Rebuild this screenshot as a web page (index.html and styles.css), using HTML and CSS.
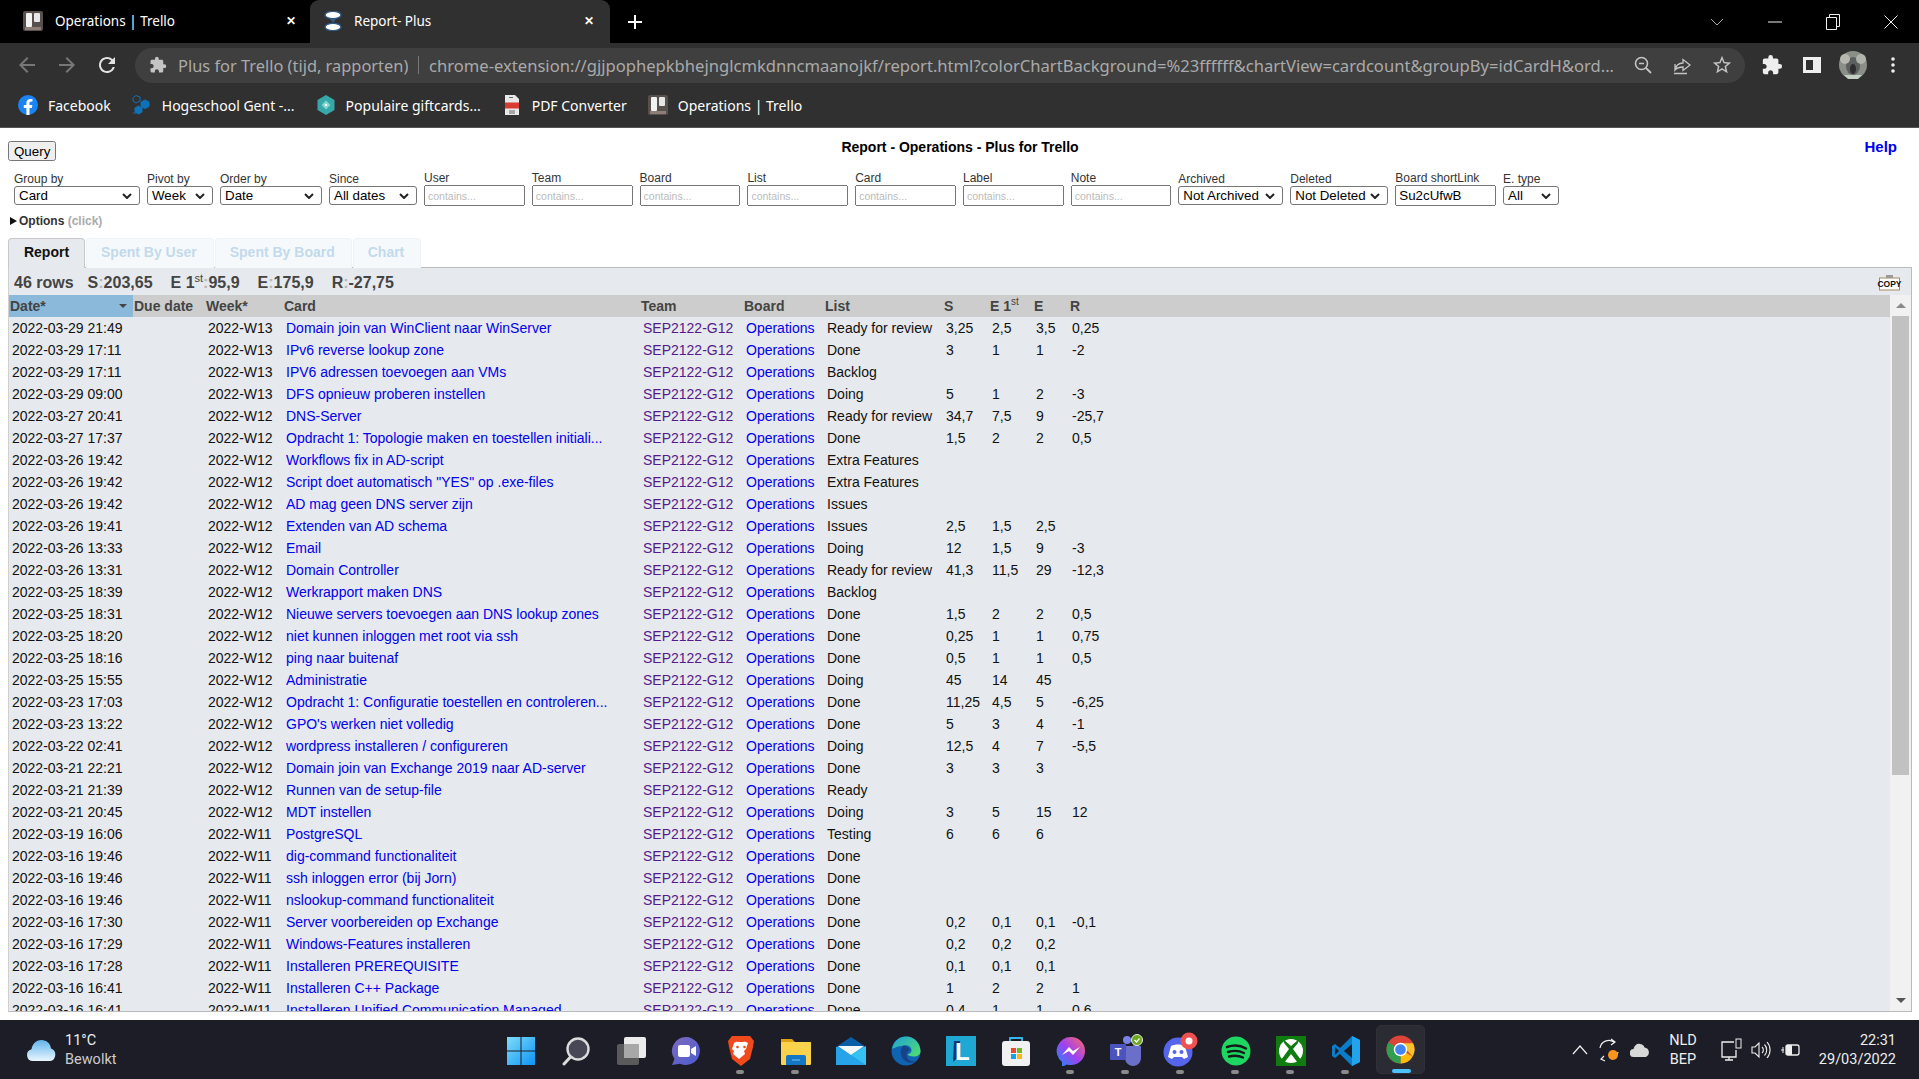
FILE: index.html
```html
<!DOCTYPE html>
<html lang="en">
<head>
    <meta charset="UTF-8">
    <title>Report- Plus</title>
    <link rel="stylesheet" href="styles.css">
</head>
<body>
<svg class="defs" width="0" height="0">
    <symbol id="trello" viewBox="0 0 20 20">
        <rect width="20" height="20" rx="2" fill="#57504c"/>
        <rect x="3" y="2" width="6" height="14" rx="1" fill="#f2f2f2"/>
        <rect x="11" y="2" width="6" height="9" rx="1" fill="#e6e6e6"/>
        <rect x="2" y="16" width="16" height="3" fill="#8d7f78"/>
    </symbol>
    <symbol id="hourglass" viewBox="0 0 20 20">
        <ellipse cx="10" cy="4" rx="8" ry="3.6" fill="#fff" stroke="#2e5a85" stroke-width="1.4"/>
        <ellipse cx="10" cy="16" rx="8" ry="3.6" fill="#fff" stroke="#2e5a85" stroke-width="1.4"/>
        <path d="M7 8h6l-3 4z" fill="#2e5a85"/>
    </symbol>
</svg>

<header class="browser">
    <div class="tabstrip">
        <div class="tab">
            <svg class="favicon" width="20" height="20"><use href="#trello"/></svg>
            <span class="tab-title">Operations | Trello</span>
            <span class="tab-close">✕</span>
        </div>
        <div class="tab tab-active">
            <svg class="favicon" width="20" height="20"><use href="#hourglass"/></svg>
            <span class="tab-title">Report- Plus</span>
            <span class="tab-close">✕</span>
        </div>
        <svg class="newtab" width="16" height="16" viewBox="0 0 16 16"><path d="M8 1v14M1 8h14" stroke="#fff" stroke-width="2"/></svg>
        <div class="window-btns">
            <svg width="14" height="10" viewBox="0 0 14 10"><path d="M1 2l6 6 6-6" fill="none" stroke="#aaa"/></svg>
            <svg width="14" height="14" viewBox="0 0 14 14"><path d="M0 7h14" stroke="#eee"/></svg>
            <svg width="14" height="16" viewBox="0 0 14 16"><path d="M.5 3.5h10v12H.5zM3.5 3V.5h10v12H11" fill="none" stroke="#eee"/></svg>
            <svg width="14" height="14" viewBox="0 0 14 14"><path d="M.5.5l13 13M13.5.5l-13 13" stroke="#eee"/></svg>
        </div>
    </div>

    <div class="toolbar">
        <svg class="nav-icon" width="24" height="24" viewBox="0 0 24 24"><path fill="#777" d="M20 11H7.83l5.59-5.59L12 4l-8 8 8 8 1.41-1.41L7.83 13H20v-2z"/></svg>
        <svg class="nav-icon" width="24" height="24" viewBox="0 0 24 24"><path fill="#777" d="M4 11h12.17l-5.59-5.59L12 4l8 8-8 8-1.41-1.41L16.17 13H4v-2z"/></svg>
        <svg class="nav-icon" width="24" height="24" viewBox="0 0 24 24"><path fill="#e3e3e3" d="M17.65 6.35A7.958 7.958 0 0 0 12 4c-4.42 0-7.99 3.58-7.99 8s3.57 8 7.99 8c3.73 0 6.84-2.55 7.73-6h-2.08A5.99 5.99 0 0 1 12 18c-3.31 0-6-2.69-6-6s2.69-6 6-6c1.66 0 3.14.69 4.22 1.78L13 11h7V4l-2.35 2.35z"/></svg>
        <div class="omnibox">
            <svg width="18" height="18" viewBox="0 0 24 24"><path fill="#c4c4c4" d="M20.5 11H19V7c0-1.1-.9-2-2-2h-4V3.5a2.5 2.5 0 0 0-5 0V5H4c-1.1 0-1.99.9-1.99 2v3.8H3.5c1.49 0 2.7 1.21 2.7 2.7s-1.21 2.7-2.7 2.7H2V20c0 1.1.9 2 2 2h3.8v-1.5c0-1.49 1.21-2.7 2.7-2.7 1.49 0 2.7 1.21 2.7 2.7V22H17c1.1 0 2-.9 2-2v-4h1.5a2.5 2.5 0 0 0 0-5z"/></svg>
            <span class="ext-name">Plus for Trello (tijd, rapporten)</span>
            <span class="ext-sep"></span>
            <span class="url">chrome-extension://gjjpophepkbhejnglcmkdnncmaanojkf/report.html?colorChartBackground=%23ffffff&amp;chartView=cardcount&amp;groupBy=idCardH&amp;ord...</span>
            <div class="omni-icons">
                <svg width="20" height="20" viewBox="0 0 20 20"><circle cx="8.5" cy="8.5" r="6" fill="none" stroke="#c4c4c4" stroke-width="1.6"/><path d="M13 13l5 5" stroke="#c4c4c4" stroke-width="1.8"/><path d="M6 8.5h5" stroke="#c4c4c4" stroke-width="1.4"/></svg>
                <svg width="20" height="20" viewBox="0 0 20 20"><path d="M2 18.5h13M3 9v6.5M3 15c1-5 4-7 8-7V4.5l7 5.5-7 5.5V12c-3 0-6 1-8 3z" fill="none" stroke="#c4c4c4" stroke-width="1.3"/></svg>
                <svg width="22" height="22" viewBox="0 0 24 24"><path fill="#c4c4c4" d="M22 9.24l-7.19-.62L12 2 9.19 8.63 2 9.24l5.46 4.73L5.82 21 12 17.27 18.18 21l-1.63-7.03L22 9.24zM12 15.4l-3.76 2.27 1-4.28-3.32-2.88 4.38-.38L12 6.1l1.71 4.04 4.38.38-3.32 2.88 1 4.28L12 15.4z"/></svg>
            </div>
        </div>
        <div class="tool-icons">
            <svg width="22" height="22" viewBox="0 0 24 24"><path fill="#eee" d="M20.5 11H19V7c0-1.1-.9-2-2-2h-4V3.5a2.5 2.5 0 0 0-5 0V5H4c-1.1 0-1.99.9-1.99 2v3.8H3.5c1.49 0 2.7 1.21 2.7 2.7s-1.21 2.7-2.7 2.7H2V20c0 1.1.9 2 2 2h3.8v-1.5c0-1.49 1.21-2.7 2.7-2.7 1.49 0 2.7 1.21 2.7 2.7V22H17c1.1 0 2-.9 2-2v-4h1.5a2.5 2.5 0 0 0 0-5z"/></svg>
            <svg width="18" height="18" viewBox="0 0 18 18"><path fill-rule="evenodd" fill="#eee" d="M0 1h18v16H0zM3 4v10h7V4z"/></svg>
            <svg class="avatar" width="28" height="28" viewBox="0 0 28 28"><circle cx="14" cy="14" r="14" fill="#8a8f88"/><ellipse cx="14" cy="15" rx="7" ry="9" fill="#5c5f60"/><circle cx="6" cy="8" r="5" fill="#b8b8b0"/><circle cx="22" cy="8" r="5" fill="#b0b4ac"/><ellipse cx="14" cy="18" rx="3" ry="5" fill="#2e2e30"/><path d="M5 24h18l-4 4H9z" fill="#c4cfc4"/></svg>
            <svg class="menu-dots" width="4" height="16" viewBox="0 0 4 16"><circle cx="2" cy="2" r="1.8" fill="#eee"/><circle cx="2" cy="8" r="1.8" fill="#eee"/><circle cx="2" cy="14" r="1.8" fill="#eee"/></svg>
        </div>
    </div>

    <nav class="bookmarks">
        <a class="bookmark">
            <svg width="20" height="20" viewBox="0 0 20 20"><circle cx="10" cy="10" r="10" fill="#1a84f4"/><path d="M13.9 12.9l.45-2.9H11.5V8.1c0-.8.4-1.55 1.65-1.55h1.3V4.1s-1.15-.2-2.25-.2c-2.3 0-3.8 1.4-3.8 3.9V10H5.8v2.9h2.6V20h3.1v-7.1z" fill="#fff"/></svg>
            Facebook
        </a>
        <a class="bookmark">
            <svg width="20" height="20" viewBox="0 0 20 20"><g fill="#0f72b8" stroke="#0f72b8"><path d="M1 3l3-2.5L8 2v4L4 8 1 6z" fill="none"/><path d="M9 7l4-2 4 2v4.5l-4 2-4-2z"/><path d="M3 13l3.5-2 3.5 2v4l-3.5 2L3 17z"/><path d="M1 18h3"/></g></svg>
            Hogeschool Gent -...
        </a>
        <a class="bookmark">
            <svg width="20" height="20" viewBox="0 0 20 20"><path d="M10 0l8.5 5v10L10 20l-8.5-5V5z" fill="#36a8a8"/><path d="M10 5.5l4.5 4.5-4.5 4.5L5.5 10z" fill="#7fd6d0"/><circle cx="10" cy="10" r="1.3" fill="#fff"/></svg>
            Populaire giftcards...
        </a>
        <a class="bookmark">
            <svg width="20" height="20" viewBox="0 0 20 20"><path d="M3 0h10l4 4v16H3z" fill="#e8e8e8"/><rect x="3" y="7.5" width="14" height="6" fill="#d83a34"/><path d="M7 2.5h4M7 16h6M7 18h6" stroke="#666"/></svg>
            PDF Converter
        </a>
        <a class="bookmark">
            <svg width="20" height="20"><use href="#trello"/></svg>
            Operations | Trello
        </a>
    </nav>
</header>

<main class="page">
    <div class="page-head">
        <div><button class="query-btn">Query</button></div>
        <div class="page-title">Report - Operations - Plus for Trello</div>
        <div class="help"><a href="#">Help</a></div>
    </div>

    <div class="filters">
        <label class="filter w-group">Group by<select><option>Card</option></select></label>
        <label class="filter w-pivot">Pivot by<select><option>Week</option></select></label>
        <label class="filter w-order">Order by<select><option>Date</option></select></label>
        <label class="filter w-since">Since<select><option>All dates</option></select></label>
        <label class="filter w-text">User<input placeholder="contains..."></label>
        <label class="filter w-text">Team<input placeholder="contains..."></label>
        <label class="filter w-text">Board<input placeholder="contains..."></label>
        <label class="filter w-text">List<input placeholder="contains..."></label>
        <label class="filter w-text">Card<input placeholder="contains..."></label>
        <label class="filter w-text">Label<input placeholder="contains..."></label>
        <label class="filter w-note">Note<input placeholder="contains..."></label>
        <label class="filter w-archived">Archived<select><option>Not Archived</option></select></label>
        <label class="filter w-deleted">Deleted<select><option>Not Deleted</option></select></label>
        <label class="filter w-text">Board shortLink<input value="Su2cUfwB"></label>
        <label class="filter w-type">E. type<select><option>All</option></select></label>
    </div>

    <div class="options"><span class="arrow"></span>Options <span class="click">(click)</span></div>

    <div class="report-tabs">
        <div class="report-tab report-tab-on">Report</div>
        <div class="report-tab">Spent By User</div>
        <div class="report-tab">Spent By Board</div>
        <div class="report-tab">Chart</div>
    </div>

    <section class="panel">
        <div class="summary">
            <span class="rows">46 rows</span>
            <span>S<i>:</i>203,65</span>
            <span>E 1<sup>st</sup><i>:</i>95,9</span>
            <span>E<i>:</i>175,9</span>
            <span>R<i>:</i>-27,75</span>
            <div class="copy">
                <svg width="23" height="16" viewBox="0 0 23 16"><rect x="1.5" y="3" width="20" height="12" fill="#fff" stroke="#a88a5c"/><rect x="8" y="0" width="7" height="3" fill="#999"/></svg>
                <span class="copy-text">COPY</span>
            </div>
        </div>
        <div class="report-body">
            <div class="table-wrap">
                <table>
                    <colgroup>
                        <col class="c-date"><col class="c-due"><col class="c-week"><col class="c-card"><col class="c-team"><col class="c-board"><col class="c-list"><col class="c-s"><col class="c-e1"><col class="c-e"><col>
                    </colgroup>
                    <thead>
                        <tr><th class="sorted">Date*</th><th>Due date</th><th>Week*</th><th>Card</th><th>Team</th><th>Board</th><th>List</th><th>S</th><th>E 1<sup>st</sup></th><th>E</th><th>R</th></tr>
                    </thead>
                    <tbody>
                        <tr><td>2022-03-29 21:49</td><td></td><td>2022-W13</td><td><a>Domain join van WinClient naar WinServer</a></td><td><a class="team">SEP2122-G12</a></td><td><a>Operations</a></td><td>Ready for review</td><td>3,25</td><td>2,5</td><td>3,5</td><td>0,25</td></tr>
                        <tr><td>2022-03-29 17:11</td><td></td><td>2022-W13</td><td><a>IPv6 reverse lookup zone</a></td><td><a class="team">SEP2122-G12</a></td><td><a>Operations</a></td><td>Done</td><td>3</td><td>1</td><td>1</td><td>-2</td></tr>
                        <tr><td>2022-03-29 17:11</td><td></td><td>2022-W13</td><td><a>IPV6 adressen toevoegen aan VMs</a></td><td><a class="team">SEP2122-G12</a></td><td><a>Operations</a></td><td>Backlog</td><td></td><td></td><td></td><td></td></tr>
                        <tr><td>2022-03-29 09:00</td><td></td><td>2022-W13</td><td><a>DFS opnieuw proberen instellen</a></td><td><a class="team">SEP2122-G12</a></td><td><a>Operations</a></td><td>Doing</td><td>5</td><td>1</td><td>2</td><td>-3</td></tr>
                        <tr><td>2022-03-27 20:41</td><td></td><td>2022-W12</td><td><a>DNS-Server</a></td><td><a class="team">SEP2122-G12</a></td><td><a>Operations</a></td><td>Ready for review</td><td>34,7</td><td>7,5</td><td>9</td><td>-25,7</td></tr>
                        <tr><td>2022-03-27 17:37</td><td></td><td>2022-W12</td><td><a>Opdracht 1: Topologie maken en toestellen initiali...</a></td><td><a class="team">SEP2122-G12</a></td><td><a>Operations</a></td><td>Done</td><td>1,5</td><td>2</td><td>2</td><td>0,5</td></tr>
                        <tr><td>2022-03-26 19:42</td><td></td><td>2022-W12</td><td><a>Workflows fix in AD-script</a></td><td><a class="team">SEP2122-G12</a></td><td><a>Operations</a></td><td>Extra Features</td><td></td><td></td><td></td><td></td></tr>
                        <tr><td>2022-03-26 19:42</td><td></td><td>2022-W12</td><td><a>Script doet automatisch "YES" op .exe-files</a></td><td><a class="team">SEP2122-G12</a></td><td><a>Operations</a></td><td>Extra Features</td><td></td><td></td><td></td><td></td></tr>
                        <tr><td>2022-03-26 19:42</td><td></td><td>2022-W12</td><td><a>AD mag geen DNS server zijn</a></td><td><a class="team">SEP2122-G12</a></td><td><a>Operations</a></td><td>Issues</td><td></td><td></td><td></td><td></td></tr>
                        <tr><td>2022-03-26 19:41</td><td></td><td>2022-W12</td><td><a>Extenden van AD schema</a></td><td><a class="team">SEP2122-G12</a></td><td><a>Operations</a></td><td>Issues</td><td>2,5</td><td>1,5</td><td>2,5</td><td></td></tr>
                        <tr><td>2022-03-26 13:33</td><td></td><td>2022-W12</td><td><a>Email</a></td><td><a class="team">SEP2122-G12</a></td><td><a>Operations</a></td><td>Doing</td><td>12</td><td>1,5</td><td>9</td><td>-3</td></tr>
                        <tr><td>2022-03-26 13:31</td><td></td><td>2022-W12</td><td><a>Domain Controller</a></td><td><a class="team">SEP2122-G12</a></td><td><a>Operations</a></td><td>Ready for review</td><td>41,3</td><td>11,5</td><td>29</td><td>-12,3</td></tr>
                        <tr><td>2022-03-25 18:39</td><td></td><td>2022-W12</td><td><a>Werkrapport maken DNS</a></td><td><a class="team">SEP2122-G12</a></td><td><a>Operations</a></td><td>Backlog</td><td></td><td></td><td></td><td></td></tr>
                        <tr><td>2022-03-25 18:31</td><td></td><td>2022-W12</td><td><a>Nieuwe servers toevoegen aan DNS lookup zones</a></td><td><a class="team">SEP2122-G12</a></td><td><a>Operations</a></td><td>Done</td><td>1,5</td><td>2</td><td>2</td><td>0,5</td></tr>
                        <tr><td>2022-03-25 18:20</td><td></td><td>2022-W12</td><td><a>niet kunnen inloggen met root via ssh</a></td><td><a class="team">SEP2122-G12</a></td><td><a>Operations</a></td><td>Done</td><td>0,25</td><td>1</td><td>1</td><td>0,75</td></tr>
                        <tr><td>2022-03-25 18:16</td><td></td><td>2022-W12</td><td><a>ping naar buitenaf</a></td><td><a class="team">SEP2122-G12</a></td><td><a>Operations</a></td><td>Done</td><td>0,5</td><td>1</td><td>1</td><td>0,5</td></tr>
                        <tr><td>2022-03-25 15:55</td><td></td><td>2022-W12</td><td><a>Administratie</a></td><td><a class="team">SEP2122-G12</a></td><td><a>Operations</a></td><td>Doing</td><td>45</td><td>14</td><td>45</td><td></td></tr>
                        <tr><td>2022-03-23 17:03</td><td></td><td>2022-W12</td><td><a>Opdracht 1: Configuratie toestellen en controleren...</a></td><td><a class="team">SEP2122-G12</a></td><td><a>Operations</a></td><td>Done</td><td>11,25</td><td>4,5</td><td>5</td><td>-6,25</td></tr>
                        <tr><td>2022-03-23 13:22</td><td></td><td>2022-W12</td><td><a>GPO's werken niet volledig</a></td><td><a class="team">SEP2122-G12</a></td><td><a>Operations</a></td><td>Done</td><td>5</td><td>3</td><td>4</td><td>-1</td></tr>
                        <tr><td>2022-03-22 02:41</td><td></td><td>2022-W12</td><td><a>wordpress installeren / configureren</a></td><td><a class="team">SEP2122-G12</a></td><td><a>Operations</a></td><td>Doing</td><td>12,5</td><td>4</td><td>7</td><td>-5,5</td></tr>
                        <tr><td>2022-03-21 22:21</td><td></td><td>2022-W12</td><td><a>Domain join van Exchange 2019 naar AD-server</a></td><td><a class="team">SEP2122-G12</a></td><td><a>Operations</a></td><td>Done</td><td>3</td><td>3</td><td>3</td><td></td></tr>
                        <tr><td>2022-03-21 21:39</td><td></td><td>2022-W12</td><td><a>Runnen van de setup-file</a></td><td><a class="team">SEP2122-G12</a></td><td><a>Operations</a></td><td>Ready</td><td></td><td></td><td></td><td></td></tr>
                        <tr><td>2022-03-21 20:45</td><td></td><td>2022-W12</td><td><a>MDT instellen</a></td><td><a class="team">SEP2122-G12</a></td><td><a>Operations</a></td><td>Doing</td><td>3</td><td>5</td><td>15</td><td>12</td></tr>
                        <tr><td>2022-03-19 16:06</td><td></td><td>2022-W11</td><td><a>PostgreSQL</a></td><td><a class="team">SEP2122-G12</a></td><td><a>Operations</a></td><td>Testing</td><td>6</td><td>6</td><td>6</td><td></td></tr>
                        <tr><td>2022-03-16 19:46</td><td></td><td>2022-W11</td><td><a>dig-command functionaliteit</a></td><td><a class="team">SEP2122-G12</a></td><td><a>Operations</a></td><td>Done</td><td></td><td></td><td></td><td></td></tr>
                        <tr><td>2022-03-16 19:46</td><td></td><td>2022-W11</td><td><a>ssh inloggen error (bij Jorn)</a></td><td><a class="team">SEP2122-G12</a></td><td><a>Operations</a></td><td>Done</td><td></td><td></td><td></td><td></td></tr>
                        <tr><td>2022-03-16 19:46</td><td></td><td>2022-W11</td><td><a>nslookup-command functionaliteit</a></td><td><a class="team">SEP2122-G12</a></td><td><a>Operations</a></td><td>Done</td><td></td><td></td><td></td><td></td></tr>
                        <tr><td>2022-03-16 17:30</td><td></td><td>2022-W11</td><td><a>Server voorbereiden op Exchange</a></td><td><a class="team">SEP2122-G12</a></td><td><a>Operations</a></td><td>Done</td><td>0,2</td><td>0,1</td><td>0,1</td><td>-0,1</td></tr>
                        <tr><td>2022-03-16 17:29</td><td></td><td>2022-W11</td><td><a>Windows-Features installeren</a></td><td><a class="team">SEP2122-G12</a></td><td><a>Operations</a></td><td>Done</td><td>0,2</td><td>0,2</td><td>0,2</td><td></td></tr>
                        <tr><td>2022-03-16 17:28</td><td></td><td>2022-W11</td><td><a>Installeren PREREQUISITE</a></td><td><a class="team">SEP2122-G12</a></td><td><a>Operations</a></td><td>Done</td><td>0,1</td><td>0,1</td><td>0,1</td><td></td></tr>
                        <tr><td>2022-03-16 16:41</td><td></td><td>2022-W11</td><td><a>Installeren C++ Package</a></td><td><a class="team">SEP2122-G12</a></td><td><a>Operations</a></td><td>Done</td><td>1</td><td>2</td><td>2</td><td>1</td></tr>
                        <tr><td>2022-03-16 16:41</td><td></td><td>2022-W11</td><td><a>Installeren Unified Communication Managed...</a></td><td><a class="team">SEP2122-G12</a></td><td><a>Operations</a></td><td>Done</td><td>0,4</td><td>1</td><td>1</td><td>0,6</td></tr>
                    </tbody>
                </table>
            </div>
            <div class="scrollbar">
                <div class="scroll-btn"><span class="tri-up"></span></div>
                <div class="scroll-thumb"></div>
                <div class="scroll-btn"><span class="tri-down"></span></div>
            </div>
        </div>
    </section>
</main>

<footer class="taskbar">
    <div class="weather">
        <svg width="30" height="26" viewBox="0 0 30 26"><defs><linearGradient id="cloud" x1="0" y1="0" x2="0" y2="1"><stop offset="0" stop-color="#5fb4ec"/><stop offset="1" stop-color="#eaf6fe"/></linearGradient></defs><path d="M7 24a6 6 0 0 1-1.5-11.8C6.5 6 11 3 15.5 3c5 0 9 3.5 9.5 8.5a6.5 6.5 0 0 1-1 12.5z" fill="url(#cloud)"/></svg>
        <div class="weather-text"><span>11°C</span><span class="dim">Bewolkt</span></div>
    </div>
    <div class="task-icons">
        <div class="task-slot">
            <svg width="30" height="30" viewBox="0 0 30 30"><defs><linearGradient id="win" x1="0" y1="0" x2="1" y2="1"><stop offset="0" stop-color="#7fdcfb"/><stop offset="1" stop-color="#0c94f5"/></linearGradient></defs><path fill="url(#win)" d="M1 1h13.5v13.5H1zM15.5 1H29v13.5H15.5zM1 15.5h13.5V29H1zM15.5 15.5H29V29H15.5z"/></svg>
        </div>
        <div class="task-slot">
            <svg width="30" height="30" viewBox="0 0 30 30"><circle cx="17" cy="13" r="10.5" fill="#474755" stroke="#dcdcdc" stroke-width="2.4"/><path d="M9.5 21L3 28" stroke="#dcdcdc" stroke-width="3" stroke-linecap="round"/></svg>
        </div>
        <div class="task-slot">
            <svg width="30" height="30" viewBox="0 0 30 30"><rect x="1" y="8" width="22" height="21" rx="2" fill="#5a5a5a"/><rect x="8" y="1" width="22" height="21" rx="2" fill="#ececec"/><rect x="8" y="8" width="15" height="14" fill="#a8a8a8"/></svg>
        </div>
        <div class="task-slot">
            <svg width="30" height="30" viewBox="0 0 30 30"><defs><linearGradient id="meet" x1="0" y1="0" x2="1" y2="1"><stop offset="0" stop-color="#7d6bbf"/><stop offset="1" stop-color="#4a5bd0"/></linearGradient></defs><path d="M15 1a14 14 0 1 1-6 26.7L1 29l2.5-6A14 14 0 0 1 15 1z" fill="url(#meet)"/><rect x="7" y="9" width="12" height="12" rx="2" fill="#fff"/><path d="M20 13l5-3v10l-5-3z" fill="#fff"/></svg>
        </div>
        <div class="task-slot has-dot">
            <svg width="30" height="32" viewBox="0 0 30 32"><path d="M6 1h18l4 5-1 6-3 12-9 7-9-7-3-12-1-6z" fill="#f0491b"/><path d="M8 8c3-2 4-1 7-1s4-1 7 1l-2 6-2 2 1 3-6 5-6-5 1-3-2-2z" fill="#fff"/><circle cx="11.5" cy="12" r="1.3" fill="#f0491b"/><circle cx="18.5" cy="12" r="1.3" fill="#f0491b"/></svg>
        </div>
        <div class="task-slot has-dot">
            <svg width="30" height="28" viewBox="0 0 30 28"><path d="M0 2h11l3 3h16v5H0z" fill="#e0a112"/><rect y="5" width="30" height="23" rx="1" fill="#fbd24c"/><path d="M7 18h16a2 2 0 0 1 2 2v8H5v-8a2 2 0 0 1 2-2z" fill="#1277c4"/><path d="M11 23h8" stroke="#7cc4f5"/></svg>
        </div>
        <div class="task-slot">
            <svg width="30" height="30" viewBox="0 0 30 30"><path d="M0 11L15 1l15 10z" fill="#0a5ea8"/><path d="M0 11h30v18H0z" fill="#27a3ea"/><path d="M2 10h26L15 19z" fill="#f5f8fb"/><path d="M15 19l15-9v19z" fill="#35c1f1"/></svg>
        </div>
        <div class="task-slot">
            <svg width="30" height="30" viewBox="0 0 30 30"><defs><linearGradient id="edge" x1="0" y1="0" x2="1" y2="1"><stop offset="0" stop-color="#1da1d8"/><stop offset="1" stop-color="#54e06c"/></linearGradient></defs><circle cx="15" cy="15" r="14.5" fill="#0f63b0"/><path d="M1 13C3 4 9 .5 15 .5 24 .5 29.5 8 29.5 15.5c0 3-3 5-7 5-3 0-5-1-6-2 3-1 4.5-3 4-5-.5-3-4-5-8-4C6 10.5 3 12 1 13z" fill="url(#edge)"/><path d="M12 10c-3 3-3 9 0 13 3 4 9 5 13 2-5 1-8-1-9-4-1-4 1-6 3-7-2-3-5-5-7-4z" fill="#1a2f6d" opacity=".6"/></svg>
        </div>
        <div class="task-slot">
            <svg width="30" height="30" viewBox="0 0 30 30"><rect width="30" height="30" fill="#20a8d4"/><path d="M8 5h6v15L7 26z" fill="#123a78"/><text class="l-text" x="9" y="24">L</text></svg>
        </div>
        <div class="task-slot">
            <svg width="30" height="30" viewBox="0 0 30 30"><path d="M9 6V2h12v4" fill="none" stroke="#34b6ee" stroke-width="1.8"/><rect x="1" y="5" width="28" height="25" rx="3" fill="#f1f1f1"/><rect x="10" y="12" width="5" height="5" fill="#ea4a2a"/><rect x="16" y="12" width="5" height="5" fill="#72b62a"/><rect x="10" y="18" width="5" height="5" fill="#12a2e8"/><rect x="16" y="18" width="5" height="5" fill="#fdb713"/></svg>
        </div>
        <div class="task-slot has-dot">
            <svg width="30" height="30" viewBox="0 0 30 30"><defs><linearGradient id="msgr" x1="0" y1="1" x2="1" y2="0"><stop offset="0" stop-color="#1590f8"/><stop offset=".5" stop-color="#a040f0"/><stop offset="1" stop-color="#ff6a68"/></linearGradient></defs><path d="M15 1a14 14 0 0 1 0 28c-1.5 0-3-.2-4-.6L6 31v-5A14 14 0 0 1 15 1z" fill="url(#msgr)"/><path d="M6 19l7-8 4 4 7-4-7 8-4-4z" fill="#fff"/></svg>
        </div>
        <div class="task-slot has-dot">
            <svg width="34" height="34" viewBox="0 0 34 34"><circle cx="18" cy="6" r="4" fill="#7b83eb"/><circle cx="27" cy="12" r="3" fill="#5059c9"/><path d="M14 12h18v11a8 8 0 0 1-16 2z" fill="#6a70c8"/><rect x="1" y="10" width="16" height="16" rx="1" fill="#4b53bc"/><text class="t-text" x="9" y="22">T</text><circle cx="28" cy="6" r="5.5" fill="#6aa81e" stroke="#e8e8e8"/><path d="M25.5 6l2 2 3-3.5" fill="none" stroke="#fff" stroke-width="1.4"/></svg>
        </div>
        <div class="task-slot has-dot">
            <svg width="36" height="38" viewBox="0 0 36 38"><circle cx="15" cy="20" r="14.5" fill="#5566ec"/><path d="M8 14c4-2 10-2 14 0l3 11-4 2-2-2h-8l-2 2-4-2z" fill="#fff"/><circle cx="11.5" cy="20" r="2" fill="#5566ec"/><circle cx="18.5" cy="20" r="2" fill="#5566ec"/><circle cx="26" cy="9" r="8.5" fill="#ee5150"/><circle cx="26" cy="9" r="3.5" fill="#fff"/></svg>
        </div>
        <div class="task-slot has-dot">
            <svg width="30" height="30" viewBox="0 0 30 30"><circle cx="15" cy="15" r="14.5" fill="#1ed760"/><path d="M6 11c6-2 13-2 19 1.5M7 16c5-1.5 11-1.5 16 1M8 20.5c4-1 10-1 14 1" fill="none" stroke="#14191a" stroke-width="2.4" stroke-linecap="round"/></svg>
        </div>
        <div class="task-slot has-dot">
            <svg width="30" height="30" viewBox="0 0 30 30"><rect width="30" height="30" fill="#107c10"/><circle cx="15" cy="15" r="12" fill="#fff"/><path d="M8 4l7 6 7-6v3l-5 6 8 11-3 3-7-9-7 9-3-3 8-11-5-6z" fill="#107c10"/></svg>
        </div>
        <div class="task-slot has-dot">
            <svg width="30" height="30" viewBox="0 0 30 30"><path d="M21 0l8 4v22l-8 4-12-12-5 4-3-2v-10l3-2 5 4z" fill="#0a7cc8"/><path d="M21 0l8 4v22l-8 4z" fill="#22a3ee"/><path d="M21 8l-8 7 8 7z" fill="#1e1e27"/><path d="M4 11l4 4-4 4z" fill="#1e1e27"/></svg>
        </div>
        <div class="task-slot active">
            <svg width="29" height="29" viewBox="0 0 30 30"><circle cx="15" cy="15" r="14.5" fill="#db4437"/><path d="M15 15L27.5 22.2A14.5 14.5 0 0 1 15 29.5z" fill="#fbbc05"/><path d="M27.5 22.2A14.5 14.5 0 0 0 28 8.5H15z" fill="#f6c32b"/><path d="M15 15L2.5 7.8A14.5 14.5 0 0 0 15 29.5z" fill="#2f9e4f"/><circle cx="15" cy="15" r="7" fill="#fff"/><circle cx="15" cy="15" r="5.5" fill="#4285f4"/></svg>
        </div>
    </div>
    <div class="tray">
        <svg width="16" height="10" viewBox="0 0 16 10"><path d="M1 9l7-8 7 8" fill="none" stroke="#eee" stroke-width="1.2"/></svg>
        <svg width="22" height="24" viewBox="0 0 22 24"><path d="M2 10a9 9 0 0 1 14-6M20 14a9 9 0 0 1-7 7M13 1l4 3-4 3M6 18l-3 3 4 2" fill="none" stroke="#eee" stroke-width="1.2"/><circle cx="15" cy="17" r="5" fill="#f7941d"/></svg>
        <svg width="20" height="14" viewBox="0 0 20 14"><path d="M4 14a4 4 0 0 1-.5-8C4.5 2 7.5 0 10 1c2 0 4 1.5 4.5 3.5A5 5 0 0 1 16 14z" fill="#d8d8d8"/></svg>
        <div class="lang"><span>NLD</span><span>BEP</span></div>
        <svg width="22" height="24" viewBox="0 0 22 24"><path d="M13 4H1v15h14v-7M4 22h8M8 19v3" fill="none" stroke="#eee" stroke-width="1.3"/><rect x="15" y="1" width="5" height="9" fill="none" stroke="#eee"/></svg>
        <svg class="speaker" width="20" height="18" viewBox="0 0 20 18"><path d="M1 6h3l4-4v14l-4-4H1z" fill="none" stroke="#eee" stroke-width="1.1"/><path d="M11 6a4 4 0 0 1 0 6M13.5 3.5a8 8 0 0 1 0 11M16 1a12 12 0 0 1 0 16" fill="none" stroke="#eee" stroke-width="1.1"/></svg>
        <svg width="20" height="18" viewBox="0 0 20 18"><rect x="5" y="4" width="13" height="10" rx="2" fill="none" stroke="#eee" stroke-width="1.3"/><path d="M0 9h3M2 6v6" stroke="#eee"/><rect x="5" y="4" width="6" height="10" fill="#eee"/></svg>
        <div class="clock"><span>22:31</span><span>29/03/2022</span></div>
    </div>
</footer>
</body>
</html>
```

FILE: styles.css
```css
* {
    box-sizing: border-box;
}

html, body {
    height: 100%;
}

body {
    margin: 0;
    display: flex;
    flex-direction: column;
    overflow: hidden;
    font-family: "Liberation Sans", Arial, sans-serif;
    font-size: 14px;
    color: #000;
    background: #fff;
}

a {
    color: #0000ee;
}

.defs {
    position: absolute;
}

/* browser chrome */
.browser {
    font-family: "Noto Sans", sans-serif;
    color: #fff;
    background: #303030;
}

.tabstrip {
    display: flex;
    align-items: stretch;
    height: 43px;
    background: #000;
}

.tab {
    display: flex;
    align-items: center;
    width: 310px;
    padding: 0 14px 2px 23px;
}

.tab-active {
    width: 300px;
    padding: 0 16px 2px 13px;
    background: #303030;
    border-radius: 9px 9px 0 0;
}

.favicon {
    flex: none;
}

.tab-title {
    flex: 1;
    margin-left: 12px;
    font-size: 13.5px;
}

.tab-active .tab-title {
    margin-left: 11px;
}

.tab-close {
    font-size: 12px;
    font-weight: bold;
}

.newtab {
    align-self: center;
    margin-left: 17px;
}

.window-btns {
    display: flex;
    align-items: center;
    gap: 44px;
    margin-left: auto;
    padding-right: 21px;
}

.toolbar {
    display: flex;
    align-items: center;
    height: 44px;
    padding-left: 15px;
}

.nav-icon {
    margin-right: 16px;
}

.omnibox {
    display: flex;
    align-items: center;
    flex: none;
    width: 1610px;
    height: 35px;
    padding-left: 14px;
    border-radius: 18px;
    background: #3f3f3f;
    font-size: 16.4px;
    white-space: nowrap;
    overflow: hidden;
}

.ext-name {
    width: 230px;
    margin-left: 11px;
    overflow: hidden;
    color: #aaa;
}

.ext-sep {
    width: 1px;
    height: 18px;
    margin: 0 10px;
    background: #777;
}

.url {
    width: 1184px;
    overflow: hidden;
    font-size: 16.6px;
    color: #aaa;
}

.omni-icons {
    display: flex;
    align-items: center;
    gap: 19px;
    margin-left: 20px;
}

.tool-icons {
    display: flex;
    align-items: center;
    gap: 20px;
    margin-left: 16px;
}

.avatar {
    margin-left: -2px;
}

.menu-dots {
    margin-left: 4px;
}

.bookmarks {
    display: flex;
    align-items: center;
    height: 41px;
    padding: 0 0 4px 18px;
    border-bottom: 1px solid #555;
    font-size: 14px;
}

.bookmark {
    display: flex;
    align-items: center;
    gap: 10px;
    margin-right: 21px;
    color: #fff;
}

/* report page */
.page {
    display: flex;
    flex-direction: column;
    flex: 1;
    min-height: 0;
    padding: 11px 7px 8px 8px;
}

.page-head {
    display: grid;
    grid-template-columns: 1fr auto 1fr;
    height: 22px;
}

.query-btn {
    height: 20px;
    margin-top: 2px;
    padding: 0 4px;
    font: 13.33px "Liberation Sans", sans-serif;
}

.page-title {
    font-weight: bold;
    line-height: 16px;
}

.help {
    padding-right: 15px;
    font-size: 15px;
    line-height: 16px;
    text-align: right;
    font-weight: bold;
}

.help a {
    text-decoration: none;
}

.filters {
    display: flex;
    align-items: center;
    gap: 7px;
    height: 35px;
    margin-top: 10px;
    padding-left: 6px;
}

.filter {
    display: flex;
    flex-direction: column;
    font-size: 12px;
    line-height: 14px;
    color: #333;
}

.filter select, .filter input {
    width: 100%;
    font: 13.33px "Liberation Sans", sans-serif;
}

.filter select {
    height: 19px;
    padding: 0 0 0 4px;
    border: 1px solid #767676;
    border-radius: 3px;
    appearance: none;
    background: #fff url("data:image/svg+xml,%3Csvg xmlns='http://www.w3.org/2000/svg' width='10' height='6'%3E%3Cpath d='M1 1l4 4 4-4' fill='none' stroke='%23222' stroke-width='2'/%3E%3C/svg%3E") no-repeat right 7px center;
}

.filter input {
    height: 21px;
    padding: 1px 2px;
}

.filter input::placeholder {
    font-size: 10.5px;
    color: #bbb;
}

.w-group { width: 126px; }
.w-pivot { width: 66px; }
.w-order { width: 102px; }
.w-since { width: 88px; }
.w-text { width: 100.8px; }
.w-note { width: 100.5px; }
.w-archived { width: 105px; }
.w-deleted { width: 98px; }
.w-type { width: 56px; }

.options {
    display: flex;
    align-items: center;
    height: 16px;
    margin-top: 7px;
    padding-left: 2px;
    font-size: 12px;
    font-weight: bold;
    color: #333;
    white-space: pre;
}

.arrow {
    width: 0;
    height: 0;
    margin-right: 2px;
    border-left: 7px solid #111;
    border-top: 4px solid transparent;
    border-bottom: 4px solid transparent;
}

.click {
    color: #aaa;
}

.report-tabs {
    position: relative;
    display: flex;
    height: 30px;
    margin-top: 9px;
    margin-bottom: -1px;
}

.report-tab {
    padding: 0 16px 0 14px;
    line-height: 26px;
    margin-right: 1px;
    border: 1px solid #f0f3f6;
    border-bottom: none;
    border-radius: 4px 4px 0 0;
    background: #f6f9fc;
    color: #c3d9ec;
    font-weight: bold;
}

.report-tab-on {
    width: 77px;
    padding: 0;
    text-align: center;
    border-color: #c8c8c8;
    background: #e6e9ed;
    color: #111;
    z-index: 1;
}

.panel {
    display: flex;
    flex-direction: column;
    flex: 1;
    min-height: 0;
    border: 1px solid #bbb;
    border-left-color: #d0d0d0;
    background: #e6e9ed;
}

.summary {
    position: relative;
    display: flex;
    align-items: center;
    flex: none;
    gap: 18px;
    height: 27px;
    padding: 2px 0 0 5px;
    font-size: 16px;
    font-weight: bold;
    color: #444;
}

.summary i {
    color: #b8b8b8;
    font-style: normal;
}

.summary sup {
    font-size: 11px;
    font-weight: normal;
    line-height: 0;
}

.rows {
    margin-right: -4px;
}

.copy {
    position: absolute;
    right: 10px;
    top: 7px;
    width: 23px;
    height: 16px;
}

.copy svg {
    display: block;
}

.copy-text {
    position: absolute;
    left: -1px;
    top: 4px;
    width: 25px;
    text-align: center;
    font-size: 8.5px;
    line-height: 10px;
    color: #111;
}

.report-body {
    display: flex;
    flex: 1;
    min-height: 0;
}

.table-wrap {
    flex: 1;
    min-width: 0;
    overflow: hidden;
}

table {
    width: 100%;
    table-layout: fixed;
    border-collapse: collapse;
}

.c-date { width: 124px; }
.c-due { width: 72px; }
.c-week { width: 78px; }
.c-card { width: 357px; }
.c-team { width: 103px; }
.c-board { width: 81px; }
.c-list { width: 119px; }
.c-s { width: 46px; }
.c-e1 { width: 44px; }
.c-e { width: 36px; }

tr {
    height: 22px;
}

th {
    padding: 0 1px;
    background: #cdcdcd;
    color: #444;
    text-align: left;
    white-space: nowrap;
}

th sup {
    font-size: 10px;
    font-weight: normal;
    line-height: 0;
}

.sorted {
    position: relative;
    background: #8ab9d9;
}

.sorted::after {
    content: "";
    position: absolute;
    right: 6px;
    top: 9px;
    border-top: 4px solid #444;
    border-left: 4px solid transparent;
    border-right: 4px solid transparent;
}

td {
    padding: 0 3px;
    color: #111;
    white-space: nowrap;
    overflow: hidden;
}

td a {
    color: #0000ee;
}

td a.team {
    color: #551a8b;
}

.scrollbar {
    display: flex;
    flex-direction: column;
    justify-content: space-between;
    flex: none;
    width: 21px;
    background: #f1f1f1;
}

.scroll-btn {
    display: flex;
    align-items: center;
    justify-content: center;
    flex: none;
    height: 21px;
}

.scroll-thumb {
    flex: 1;
    width: 17px;
    margin: 0 2px 215px;
    background: #c1c1c1;
}

.tri-up, .tri-down {
    border-left: 5px solid transparent;
    border-right: 5px solid transparent;
}

.tri-up {
    border-bottom: 5px solid #8a8a8a;
}

.tri-down {
    border-top: 5px solid #555;
}

/* windows taskbar */
.taskbar {
    display: flex;
    align-items: center;
    flex: none;
    height: 59px;
    font-family: Roboto, sans-serif;
    font-size: 14.5px;
    line-height: 19px;
    color: #eee;
    background: #1c1d26;
}

.weather {
    display: flex;
    align-items: center;
    flex: none;
    gap: 9px;
    width: 493px;
    padding-left: 26px;
}

.weather-text, .lang, .clock {
    display: flex;
    flex-direction: column;
}

.dim {
    color: #ccc;
}

.task-icons {
    display: flex;
    flex: none;
    height: 100%;
}

.task-slot {
    position: relative;
    display: flex;
    align-items: center;
    justify-content: center;
    width: 55px;
    padding-top: 2px;
}

.has-dot::after {
    content: "";
    position: absolute;
    left: 23px;
    bottom: 5px;
    width: 8px;
    height: 4px;
    border-radius: 2px;
    background: #8a8a8a;
}

.active {
    width: 49px;
    margin: 5px 3px;
    padding-top: 0;
    border: 1px solid #2f3038;
    border-radius: 5px;
    background: #2a2b33;
}

.active::after {
    content: "";
    position: absolute;
    left: 15px;
    bottom: 0;
    width: 19px;
    height: 4px;
    border-radius: 2px;
    background: #4cc2ff;
}

.tray {
    display: flex;
    align-items: center;
    gap: 10px;
    margin-left: auto;
    padding-right: 23px;
}

.speaker {
    margin-left: -2px;
}

.lang {
    align-items: center;
    width: 28px;
    margin: 0 14px 0 9px;
}

.clock {
    align-items: flex-end;
    width: 83px;
    margin-left: 2px;
}

.l-text {
    font: bold 24px "Liberation Sans", sans-serif;
    fill: #fff;
}

.t-text {
    font: bold 11px "Liberation Sans", sans-serif;
    fill: #fff;
    text-anchor: middle;
}
```
